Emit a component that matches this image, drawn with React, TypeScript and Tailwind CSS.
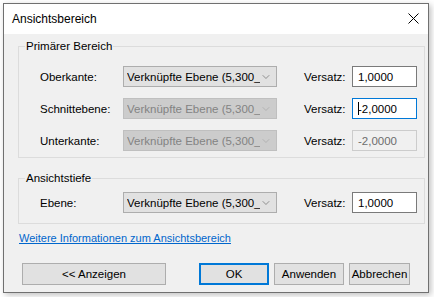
import { ChevronDown } from 'lucide-react';

const Combo = ({ disabled }: { disabled?: boolean }) => (
  <div
    className={`flex h-[21px] w-[154px] items-center border pl-[3px] pr-[4px] ${
      disabled ? 'border-[#bfbfbf] bg-[#cccccc] text-[#838383]' : 'border-[#adadad] bg-[#e1e1e1] text-black'
    }`}
  >
    <span className="w-[134px] overflow-hidden whitespace-nowrap">Verknüpfte Ebene (5,300_0</span>
    <ChevronDown size={12} strokeWidth={1.2} className={`ml-auto ${disabled ? 'text-[#a0a0a0]' : 'text-[#555]'}`} />
  </div>
);

const Input = ({ value, state }: { value: string; state?: 'focus' | 'disabled' }) => {
  const cls =
    state === 'focus'
      ? 'border-[#0078d7] bg-white text-black'
      : state === 'disabled'
      ? 'border-[#cccccc] bg-[#f0f0f0] text-[#6d6d6d]'
      : 'border-[#7a7a7a] bg-white text-black';
  return (
    <div className={`flex h-[21px] w-[65px] items-center border pl-[5px] ${cls}`}>
      {state === 'focus' && <span className="mr-[-1px] h-[13px] w-px bg-black"></span>}
      <span>{value}</span>
    </div>
  );
};

const Row = ({
  label,
  comboDisabled,
  value,
  state,
}: {
  label: string;
  comboDisabled?: boolean;
  value: string;
  state?: 'focus' | 'disabled';
}) => (
  <div className="flex items-center">
    <span className="w-[83px] pl-[21px] box-content">{label}</span>
    <Combo disabled={comboDisabled} />
    <span className="ml-[27px] w-[48px]">Versatz:</span>
    <Input value={value} state={state} />
  </div>
);

const Button = ({ label, w, def }: { label: string; w: string; def?: boolean }) => (
  <div
    className={`flex h-[22px] items-center justify-center bg-[#e1e1e1] ${w} ${
      def ? 'border-2 border-[#0078d7]' : 'border border-[#adadad]'
    }`}
  >
    {label}
  </div>
);

export default function App() {
  return (
    <div className="h-[297px] w-[434px] bg-white pl-[3px] pt-[3px]" style={{ fontFamily: '"Liberation Sans", Arial, sans-serif' }}>
      <div className="flex h-[290px] w-[426px] flex-col border border-[#707070] bg-[#f0f0f0] text-[11.5px] leading-[16px] text-black shadow-[2px_2px_6px_rgba(0,0,0,0.25)]">
        <div className="flex h-[30px] items-center justify-between bg-white pl-[8px] pr-[9px] text-[12px]">
          <span>Ansichtsbereich</span>
          <svg width="11" height="11" viewBox="0 0 11 11" className="mb-[1px]">
            <path d="M0.5 0.5 L10.5 10.5 M10.5 0.5 L0.5 10.5" stroke="#000" strokeWidth="1" />
          </svg>
        </div>

        <fieldset className="ml-[14px] mr-[3px] mt-[4px] border border-[#dcdcdc] pb-[6px] pt-[12px]">
          <legend className="ml-[6px] px-[1px]">Primärer Bereich</legend>
          <div className="flex flex-col gap-[11px]">
            <Row label="Oberkante:" value="1,0000" />
            <Row label="Schnittebene:" comboDisabled value="-2,0000" state="focus" />
            <Row label="Unterkante:" comboDisabled value="-2,0000" state="disabled" />
          </div>
        </fieldset>

        <fieldset className="ml-[14px] mr-[3px] mt-[12px] border border-[#dcdcdc] pb-[10px] pt-[6px]">
          <legend className="ml-[6px] px-[1px]">Ansichtstiefe</legend>
          <Row label="Ebene:" value="1,0000" />
        </fieldset>

        <div className="ml-[15px] mt-[6px] text-[11px]">
          <span className="text-[#0066cc] underline">Weitere Informationen zum Ansichtsbereich</span>
        </div>

        <div className="mt-auto mb-[7px] flex items-center pl-[18px]">
          <Button label="<< Anzeigen" w="w-[144px]" />
          <div className="ml-[33px] flex gap-[5px]">
            <Button label="OK" w="w-[70px]" def />
            <Button label="Anwenden" w="w-[70px]" />
            <Button label="Abbrechen" w="w-[61px]" />
          </div>
        </div>
      </div>
    </div>
  );
}
